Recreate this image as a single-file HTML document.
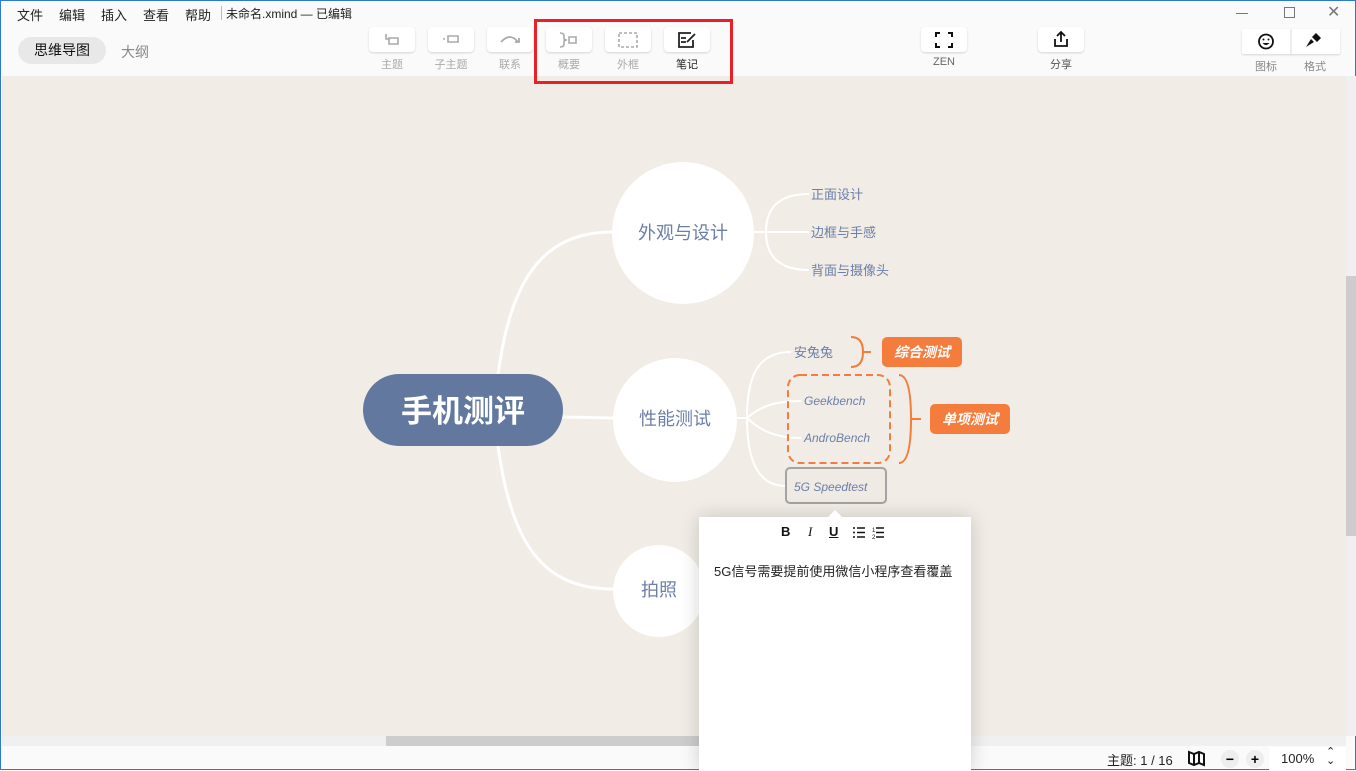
<!DOCTYPE html>
<html><head><meta charset="utf-8">
<style>
*{margin:0;padding:0;box-sizing:border-box}
body{width:1356px;height:770px;overflow:hidden;font-family:"Liberation Sans","Noto Sans CJK SC",sans-serif;background:#fafafa;position:relative;border:1px solid #2b7bd3}
.abs{position:absolute}
.menu{top:4px;font-size:13px;color:#222}
.btn{position:absolute;top:26px;height:25px;background:#fff;border-radius:4px;box-shadow:0 1px 2px rgba(0,0,0,.15)}
.lbl{position:absolute;top:55px;font-size:11px;color:#aaa;text-align:center;width:60px}
</style></head><body>
<div class="abs menu" style="left:16px">文件</div>
<div class="abs menu" style="left:58px">编辑</div>
<div class="abs menu" style="left:100px">插入</div>
<div class="abs menu" style="left:142px">查看</div>
<div class="abs menu" style="left:184px">帮助</div>
<div class="abs" style="left:220px;top:5px;width:1px;height:14px;background:#bbb"></div>
<div class="abs menu" style="left:225px;font-size:12px">未命名.xmind — 已编辑</div>
<div class="abs" style="left:1235px;top:12px;width:12px;height:1px;background:#777"></div>
<div class="abs" style="left:1283px;top:6px;width:11px;height:11px;border:1px solid #777"></div>
<div class="abs" style="left:1326px;top:1px;font-size:16px;color:#777">✕</div>

<div class="abs" style="left:17px;top:36px;width:88px;height:27px;border-radius:14px;background:#e8e8e8;font-size:14px;line-height:27px;text-align:center;color:#111">思维导图</div>
<div class="abs" style="left:120px;top:41px;font-size:14px;color:#888">大纲</div>

<div class="btn" style="left:368px;width:46px"><svg width="46" height="25"><path d="M17 7v5h4M20 11h9v6h-9z" fill="none" stroke="#aaa" stroke-width="1.6"/></svg></div>
<div class="lbl" style="left:361px">主题</div>
<div class="btn" style="left:427px;width:46px"><svg width="46" height="25"><path d="M15 12h2M20 9h10v6H20z" fill="none" stroke="#aaa" stroke-width="1.6"/></svg></div>
<div class="lbl" style="left:420px">子主题</div>
<div class="btn" style="left:486px;width:46px"><svg width="46" height="25"><path d="M14 15q9-10 17 0M28 15h4v-4" fill="none" stroke="#aaa" stroke-width="1.8"/></svg></div>
<div class="lbl" style="left:479px">联系</div>
<div class="btn" style="left:545px;width:46px"><svg width="46" height="25"><path d="M14 6q4 0 4 3v3l2 1-2 1v3q0 3-4 3M23 10h7v6h-7z" fill="none" stroke="#aaa" stroke-width="1.6"/></svg></div>
<div class="lbl" style="left:538px">概要</div>
<div class="btn" style="left:604px;width:46px"><svg width="46" height="25"><rect x="14" y="6" width="18" height="14" fill="none" stroke="#aaa" stroke-width="1.6" stroke-dasharray="3 2"/></svg></div>
<div class="lbl" style="left:597px">外框</div>
<div class="btn" style="left:663px;width:46px"><svg width="46" height="25"><path d="M27 6h-12v14h14v-7M17 11h5M17 15h5M23 15l8-8" fill="none" stroke="#222" stroke-width="1.8"/></svg></div>
<div class="lbl" style="left:656px;color:#222">笔记</div>

<div class="btn" style="left:920px;width:46px"><svg width="46" height="25"><path d="M15 10V6h4M27 6h4v4M31 16v4h-4M19 20h-4v-4" fill="none" stroke="#111" stroke-width="2"/></svg></div>
<div class="lbl" style="left:913px;color:#666">ZEN</div>
<div class="btn" style="left:1037px;width:46px"><svg width="46" height="25"><path d="M17 12v7h12v-7M23 15V5M19 9l4-4 4 4" fill="none" stroke="#111" stroke-width="1.8"/></svg></div>
<div class="lbl" style="left:1030px;color:#555">分享</div>
<div class="btn" style="left:1241px;width:98px;top:28px;border-radius:2px"><svg width="98" height="25"><circle cx="24" cy="12.5" r="7" fill="none" stroke="#111" stroke-width="1.8"/><circle cx="21.5" cy="10.5" r="1" fill="#111"/><circle cx="26.5" cy="10.5" r="1" fill="#111"/><path d="M20.5 14h7q-3.5 4-7 0z" fill="#111"/><line x1="49" y1="0" x2="49" y2="25" stroke="#ddd"/><path d="M70 8l4-4 5 5-4 4z M69 10l-5 8 8-5z" fill="#111"/></svg></div>
<div class="lbl" style="left:1235px;top:57px;color:#888">图标</div>
<div class="lbl" style="left:1284px;top:57px;color:#888">格式</div>

<div class="abs" style="left:1px;top:75px;width:1344px;height:660px;background:#f1ece6;overflow:hidden">
<svg width="1344" height="660" style="position:absolute;left:0;top:0" viewBox="1 75 1344 660">
<g fill="none" stroke="#fff" stroke-width="3">
<path d="M497 373 C510 280 540 231 612 231"/>
<path d="M560 416 L612 417"/>
<path d="M497 445 C510 540 540 588 612 588"/>
</g>
<g fill="none" stroke="#fff" stroke-width="2">
<path d="M752 231 H765 M765 231 C765 205 780 193 808 193 M765 231 H808 M765 231 C765 257 780 269 808 269"/>
<path d="M736 417 H746 M746 417 C746 370 760 351 790 351 M746 417 C760 405 775 400 800 400 M746 417 C760 430 775 437 800 437 M746 417 C746 465 760 485 785 485"/>
</g>
<rect x="362" y="373" width="200" height="72" rx="36" fill="#62789f"/>
<text x="462" y="421" font-size="31" font-weight="bold" fill="#fff" text-anchor="middle" font-family="Liberation Sans,Noto Sans CJK SC,sans-serif">手机测评</text>
<circle cx="682" cy="232" r="71" fill="#fff"/>
<circle cx="674" cy="419" r="62" fill="#fff"/>
<circle cx="658" cy="590" r="46" fill="#fff"/>
<g font-family="Liberation Sans,Noto Sans CJK SC,sans-serif" fill="#6b7fa8">
<text x="682" y="238" font-size="18" text-anchor="middle">外观与设计</text>
<text x="674" y="424" font-size="18" text-anchor="middle">性能测试</text>
<text x="658" y="595" font-size="18" text-anchor="middle">拍照</text>
<text x="810" y="198" font-size="13">正面设计</text>
<text x="810" y="236" font-size="13">边框与手感</text>
<text x="810" y="274" font-size="13">背面与摄像头</text>
<text x="793" y="356" font-size="13">安兔兔</text>
<text x="803" y="404" font-size="12" font-style="italic">Geekbench</text>
<text x="803" y="441" font-size="12" font-style="italic">AndroBench</text>
</g>
<rect x="785" y="467" width="100" height="35" rx="4" fill="#efeae4" stroke="#a3a3a3" stroke-width="2"/>
<text x="793" y="490" font-size="12" font-style="italic" fill="#6b7fa8" font-family="Liberation Sans,sans-serif">5G Speedtest</text>
<rect x="787" y="374" width="102" height="88" rx="12" fill="none" stroke="#f47c3c" stroke-width="2" stroke-dasharray="7 4"/>
<path d="M850 336 Q862 336 862 351 Q862 366 850 366 M862 351 H870" fill="none" stroke="#f47c3c" stroke-width="2"/>
<path d="M898 374 Q910 374 910 418 Q910 462 898 462 M910 418 H920" fill="none" stroke="#f47c3c" stroke-width="2"/>
<rect x="881" y="336" width="80" height="30" rx="5" fill="#f47c3c"/>
<text x="921" y="356" font-size="14" font-weight="bold" font-style="italic" fill="#fff" text-anchor="middle" font-family="Liberation Sans,Noto Sans CJK SC,sans-serif">综合测试</text>
<rect x="929" y="403" width="80" height="30" rx="5" fill="#f47c3c"/>
<text x="969" y="423" font-size="14" font-weight="bold" font-style="italic" fill="#fff" text-anchor="middle" font-family="Liberation Sans,Noto Sans CJK SC,sans-serif">单项测试</text>
</svg>
</div>
<div class="abs" style="left:533px;top:18px;width:199px;height:65px;border:3px solid #e8202a"></div>
<!-- scrollbars -->
<div class="abs" style="left:1345px;top:75px;width:11px;height:660px;background:#f0f0f0"></div>
<div class="abs" style="left:1345px;top:275px;width:11px;height:260px;background:#cdcdcd"></div>
<div class="abs" style="left:1px;top:735px;width:1344px;height:10px;background:#f0f0f0"></div>
<div class="abs" style="left:385px;top:735px;width:320px;height:10px;background:#cdcdcd"></div>
<!-- popup -->
<div class="abs" style="left:698px;top:516px;width:272px;height:254px;background:#fff;box-shadow:0 0 18px rgba(0,0,0,.18)"></div>
<div class="abs" style="left:827px;top:509px;width:0;height:0;border-left:7px solid transparent;border-right:7px solid transparent;border-bottom:7px solid #fff"></div>
<div class="abs" style="left:780px;top:523px;font-size:13px;font-weight:bold;color:#111">B</div>
<div class="abs" style="left:807px;top:523px;font-size:13px;font-style:italic;color:#111;font-family:'Liberation Serif',serif">I</div>
<div class="abs" style="left:828px;top:523px;font-size:13px;font-weight:bold;text-decoration:underline;color:#111">U</div>
<svg class="abs" style="left:850px;top:524px" width="50" height="16"><circle cx="3" cy="3" r="1" fill="#111"/><circle cx="3" cy="7.5" r="1" fill="#111"/><circle cx="3" cy="12" r="1" fill="#111"/><path d="M6 3h8M6 7.5h8M6 12h8" stroke="#111" stroke-width="1.4"/><path d="M25 3h8M25 7.5h8M25 12h8" stroke="#111" stroke-width="1.4"/><text x="21" y="7" font-size="6" fill="#111">1</text><text x="21" y="14" font-size="6" fill="#111">2</text></svg>
<div class="abs" style="left:713px;top:560px;font-size:13px;color:#222">5G信号需要提前使用微信小程序查看覆盖</div>
<!-- status -->
<div class="abs" style="left:1106px;top:749px;font-size:13px;color:#222">主题: 1 / 16</div>
<svg class="abs" style="left:1186px;top:748px" width="20" height="18"><path d="M2 3l5 2 5-2 5 2v11l-5-2-5 2-5-2z M7 5v11 M12 3v11" fill="none" stroke="#111" stroke-width="2"/></svg>
<div class="abs" style="left:1220px;top:749px;width:18px;height:18px;border-radius:9px;background:#eee;text-align:center;font-size:14px;line-height:18px;font-weight:bold">−</div>
<div class="abs" style="left:1245px;top:749px;width:18px;height:18px;border-radius:9px;background:#eee;text-align:center;font-size:14px;line-height:18px;font-weight:bold">+</div>
<div class="abs" style="left:1268px;top:746px;width:77px;height:24px;background:#fff"></div>
<div class="abs" style="left:1280px;top:750px;font-size:13px;color:#222">100%</div>
<div class="abs" style="left:1325px;top:747px;font-size:11px;line-height:9px;color:#222">⌃<br>⌄</div>
</body></html>
